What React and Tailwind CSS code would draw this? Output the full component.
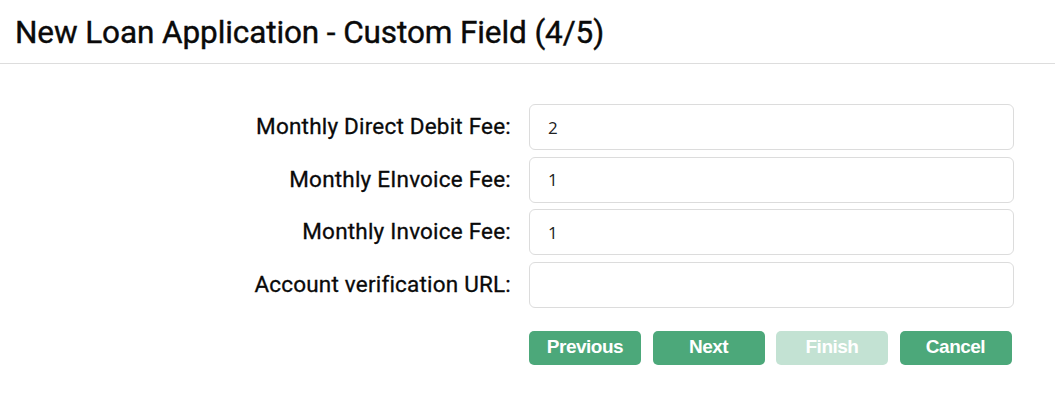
export default function App() {
  const fields = [
    { label: "Monthly Direct Debit Fee:", value: "2" },
    { label: "Monthly EInvoice Fee:", value: "1" },
    { label: "Monthly Invoice Fee:", value: "1" },
    { label: "Account verification URL:", value: "" },
  ];

  const buttons = [
    { text: "Previous", disabled: false },
    { text: "Next", disabled: false },
    { text: "Finish", disabled: true },
    { text: "Cancel", disabled: false },
  ];

  return (
    <div className="w-[1055px] h-[398px] bg-white font-['Roboto',sans-serif] text-[#0a0a0a]">
      {/* Header */}
      <div className="h-[64px] border-b border-[#dddddd] pl-[15px] flex items-center">
        <h1 className="text-[31.5px] leading-none tracking-[-0.1px] pt-[2px] [-webkit-text-stroke:0.4px_#0a0a0a]">
          New Loan Application - Custom Field (4/5)
        </h1>
      </div>

      {/* Form */}
      <div className="pt-[40px]">
        <div className="grid grid-cols-[511px_485px] gap-x-[18px] gap-y-[6.5px]">
          {fields.map((f) => (
            <div key={f.label} className="contents">
              <label className="text-right text-[22.5px] tracking-[0.2px] self-center [-webkit-text-stroke:0.3px_#0a0a0a]">
                {f.label}
              </label>
              <input
                type="text"
                defaultValue={f.value}
                className="h-[46px] rounded-[6px] border border-[#dcdcdc] px-[18px] text-[17px] font-['Open_Sans',sans-serif] text-[#222] outline-none"
              />
            </div>
          ))}
        </div>

        {/* Buttons */}
        <div className="flex gap-[11.5px] pl-[529px] mt-[23px]">
          {buttons.map((b) => (
            <button
              key={b.text}
              disabled={b.disabled}
              className={`w-[112px] h-[34px] rounded-[5px] text-white font-bold text-[19px] tracking-[-0.5px] font-['Liberation_Sans',sans-serif] ${b.disabled ? "bg-[#c3e2d3]" : "bg-[#4ca87a]"}`}
            >
              {b.text}
            </button>
          ))}
        </div>
      </div>
    </div>
  );
}
